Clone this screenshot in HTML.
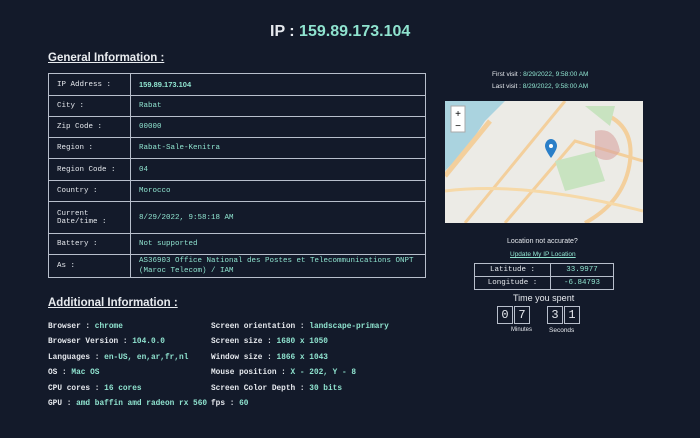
<!DOCTYPE html>
<html><head><style>
*{margin:0;padding:0;box-sizing:border-box}
body{width:700px;height:438px;background:#131a2a;color:#e6e9ee;font-family:"Liberation Sans",sans-serif;position:relative;overflow:hidden}
.a{position:absolute;white-space:nowrap}
.t{color:#8fe3cf}
.m{font-family:"Liberation Mono",monospace;font-size:7.8px}
h2{position:absolute;font-size:11.5px;font-weight:900;text-decoration:underline;color:#e8ebef}
table{border-collapse:collapse;position:absolute}
td{border:1px solid #b8bfcc;padding:0 8px;font-family:"Liberation Mono",monospace;font-size:7.5px;vertical-align:middle}
.g td:first-child{width:82px}
.d{position:absolute;top:306px;width:16px;height:18px;border:1px solid #b8bfcc;font-family:"Liberation Mono",monospace;font-size:12px;text-align:center;line-height:16px}
</style></head><body>
<div class="a" style="left:270px;top:23px;font-size:16px;font-weight:bold">IP : <span class="t">159.89.173.104</span></div>
<h2 style="left:48px;top:52px">General Information :</h2>
<table class="g" style="left:48px;top:73px;width:378px">
<tr style="height:22px"><td>IP Address :</td><td class="t" style="font-family:'Liberation Sans';font-weight:bold">159.89.173.104</td></tr>
<tr style="height:21px"><td>City :</td><td class="t">Rabat</td></tr>
<tr style="height:21px"><td>Zip Code :</td><td class="t">00000</td></tr>
<tr style="height:21px"><td>Region :</td><td class="t">Rabat-Sale-Kenitra</td></tr>
<tr style="height:22px"><td>Region Code :</td><td class="t">04</td></tr>
<tr style="height:21px"><td>Country :</td><td class="t">Morocco</td></tr>
<tr style="height:32px"><td>Current<br>Date/time :</td><td class="t">8/29/2022, 9:58:18 AM</td></tr>
<tr style="height:21px"><td>Battery :</td><td class="t">Not supported</td></tr>
<tr style="height:23px"><td>As :</td><td class="t" style="line-height:10px">AS36903 Office National des Postes et Telecommunications ONPT<br>(Maroc Telecom) / IAM</td></tr>
</table>
<div class="a" style="left:492px;top:71px;font-size:6.5px">First visit : <span class="t">8/29/2022, 9:58:00 AM</span></div>
<div class="a" style="left:492px;top:83px;font-size:6.5px">Last visit : <span class="t">8/29/2022, 9:58:00 AM</span></div>
<svg class="a" style="left:445px;top:101px" width="198" height="122" viewBox="0 0 198 122">
<rect width="198" height="122" fill="#ecebe6"/>
<path d="M0 0H60L40 20L20 50L0 70Z" fill="#aad3df"/>
<path d="M0 75L45 20" stroke="#f3cf9c" stroke-width="5" fill="none"/>
<path d="M150 10Q190 20 185 60Q180 100 140 122" stroke="#f3cf9c" stroke-width="4" fill="none"/>
<path d="M20 122L120 0" stroke="#f3cf9c" stroke-width="3" fill="none"/>
<path d="M60 122L130 40L198 60" stroke="#f3cf9c" stroke-width="3" fill="none"/>
<path d="M0 90Q80 80 198 110" stroke="#f6d9a8" stroke-width="3" fill="none"/>
<path d="M110 60L150 50L160 80L120 90Z" fill="#c8e3c0"/>
<path d="M140 5L170 5L165 25Z" fill="#c8e3c0"/>
<path d="M150 30Q170 25 175 50Q165 65 150 55Z" fill="#d9a3a0" opacity=".6"/>
<path d="M100 45c0-4 3-7 6-7s6 3 6 7c0 4-6 12-6 12s-6-8-6-12z" fill="#2b7fc8"/>
<circle cx="106" cy="45" r="2" fill="#fff"/>
<rect x="6" y="5" width="14" height="26" fill="#fff" stroke="#aaa"/>
<text x="13" y="16" font-size="10" text-anchor="middle" fill="#000">+</text>
<text x="13" y="28" font-size="10" text-anchor="middle" fill="#000">−</text>
</svg>
<div class="a" style="left:507px;top:238px;font-size:7px">Location not accurate?</div>
<div class="a t" style="left:510px;top:251px;font-size:6.5px;text-decoration:underline">Update My IP Location</div>
<table style="left:474px;top:263px;width:140px">
<tr style="height:13px"><td style="text-align:center;width:76px">Latitude :</td><td class="t" style="text-align:center">33.9977</td></tr>
<tr style="height:13px"><td style="text-align:center">Longitude :</td><td class="t" style="text-align:center">-6.84793</td></tr>
</table>
<div class="a" style="left:513px;top:293px;font-size:9px">Time you spent</div>
<div class="d" style="left:497px">0</div><div class="d" style="left:514px">7</div>
<div class="d" style="left:547px">3</div><div class="d" style="left:564px">1</div>
<div class="a" style="left:511px;top:327px;font-size:6px">Minutes</div>
<div class="a" style="left:549px;top:327px;font-size:6.5px">Seconds</div>
<h2 style="left:48px;top:297px">Additional Information :</h2>
<div class="a m" style="left:48px;top:320px;line-height:15.4px;font-weight:bold">Browser : <span class="t">chrome</span><br>Browser Version : <span class="t">104.0.0</span><br>Languages : <span class="t">en-US, en,ar,fr,nl</span><br>OS : <span class="t">Mac OS</span><br>CPU cores : <span class="t">16 cores</span><br>GPU : <span class="t">amd baffin amd radeon rx 560</span></div>
<div class="a m" style="left:211px;top:320px;line-height:15.4px;font-weight:bold">Screen orientation : <span class="t">landscape-primary</span><br>Screen size : <span class="t">1680 x 1050</span><br>Window size : <span class="t">1866 x 1043</span><br>Mouse position : <span class="t">X - 202, Y - 8</span><br>Screen Color Depth : <span class="t">30 bits</span><br>fps : <span class="t">60</span></div>
</body></html>
